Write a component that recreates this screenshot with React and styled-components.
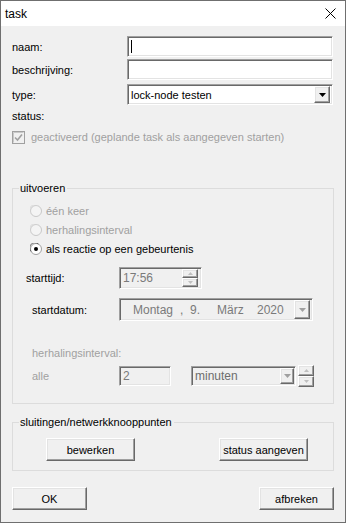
import React from 'react';
import styled, { createGlobalStyle } from 'styled-components';

const GlobalStyle = createGlobalStyle`
  html, body { margin: 0; padding: 0; background: #fff; }
  body { font-family: "Liberation Sans", Arial, sans-serif; font-size: 11px; color: #000; }
  * { box-sizing: border-box; }
`;

const Window = styled.div`
  width: 346px;
  height: 523px;
  border: 1px solid #6f6f6f;
  background: #f0f0f0;
  display: flex;
  flex-direction: column;
`;

const TitleBar = styled.div`
  height: 25px;
  background: #fff;
  display: flex;
  align-items: center;
  justify-content: space-between;
  padding: 0 9px 0 4px;
  font-size: 12px;
`;

const Body = styled.div`
  padding: 10px 11px 0 11px;
  display: flex;
  flex-direction: column;
`;

const Row = styled.div`
  display: flex;
  align-items: center;
  height: ${p => p.$h || 21}px;
  margin-top: ${p => p.$mt || 0}px;
  padding-left: ${p => p.$indent || 0}px;
`;

const Label = styled.span`
  width: ${p => p.$w || 115}px;
  flex: none;
  color: ${p => (p.$disabled ? '#a0a0a0' : '#000')};
`;

const sunken = `
  border: 1px solid;
  border-color: #a0a0a0 #fff #fff #a0a0a0;
  box-shadow: inset 1px 1px #696969, inset -1px -1px #e3e3e3;
`;

const raised = `
  border: 1px solid;
  border-color: #fff #696969 #696969 #fff;
  box-shadow: inset -1px -1px #a0a0a0, inset 1px 1px #e3e3e3;
  background: #f0f0f0;
`;

const TextBox = styled.div`
  ${sunken}
  width: ${p => p.$w}px;
  height: ${p => p.$h || 21}px;
  background: ${p => (p.$disabled ? '#f0f0f0' : '#fff')};
  color: ${p => (p.$disabled ? '#7a7a7a' : '#000')};
  display: flex;
  align-items: center;
  padding: 0 3px;
  flex: none;
  white-space: nowrap;
  font-size: ${p => p.$fs || 11}px;
`;

const Caret = styled.span`
  width: 1px;
  height: 13px;
  background: #000;
`;

const Grow = styled.span`
  flex: 1;
`;

const ArrowButton = styled.div`
  ${raised}
  width: ${p => p.$w || 16}px;
  height: ${p => p.$h || 17}px;
  display: flex;
  align-items: center;
  justify-content: center;
  flex: none;
`;

const Spinner = styled.div`
  display: flex;
  flex-direction: column;
  margin-left: ${p => p.$ml || 0}px;
  flex: none;
`;

const SpinHalf = styled.div`
  ${raised}
  width: ${p => p.$w || 16}px;
  height: ${p => p.$h || 9}px;
  display: flex;
  align-items: center;
  justify-content: center;
`;

const CheckRow = styled.div`
  display: flex;
  align-items: center;
  gap: 6px;
  height: 14px;
  margin-top: ${p => p.$mt || 0}px;
  color: #a0a0a0;
`;

const Group = styled.div`
  border: 1px solid #dcdcdc;
  margin-top: ${p => p.$mt}px;
  height: ${p => p.$h}px;
  display: flex;
  flex-direction: column;
`;

const Legend = styled.div`
  align-self: flex-start;
  margin: -7px 0 0 6px;
  padding: 0 2px 0 1px;
  line-height: 13px;
  height: 13px;
  background: #f0f0f0;
`;

const RadioRow = styled.div`
  display: flex;
  align-items: center;
  gap: 4px;
  height: 19px;
  padding-left: 17px;
  margin-top: ${p => p.$mt || 0}px;
  color: ${p => (p.$disabled ? '#a0a0a0' : '#000')};
`;

const DatePart = styled.span`
  width: ${p => p.$w}px;
  flex: none;
`;

const ButtonRow = styled.div`
  display: flex;
  justify-content: space-between;
  padding: ${p => p.$pad};
  margin-top: ${p => p.$mt || 0}px;
`;

const Button = styled.button`
  ${raised}
  width: ${p => p.$w}px;
  height: ${p => p.$h || 23}px;
  font-family: "Liberation Sans", Arial, sans-serif;
  font-size: 11px;
  color: #000;
  padding: 0;
`;

const CloseIcon = () => (
  <svg width="11" height="11" viewBox="0 0 11 11">
    <path d="M0.5 0.5 L10.5 10.5 M10.5 0.5 L0.5 10.5" stroke="#000" strokeWidth="1" />
  </svg>
);

const DownTri = ({ color = '#000', w = 7 }) => (
  <svg width={w} height={Math.ceil(w / 2)} viewBox={`0 0 ${w} ${Math.ceil(w / 2)}`}>
    <path d={`M0 0 H${w} L${w / 2} ${Math.ceil(w / 2)} Z`} fill={color} />
  </svg>
);

const SpinTri = ({ up, color = '#c0c0c0' }) => (
  <svg width="5" height="3" viewBox="0 0 5 3">
    <path d={up ? 'M2.5 0 L5 3 H0 Z' : 'M0 0 H5 L2.5 3 Z'} fill={color} />
  </svg>
);

const Radio = ({ checked, disabled }) => (
  <svg width="12" height="12" viewBox="0 0 12 12">
    <circle cx="6" cy="6" r="5.5" fill={disabled ? '#f4f4f4' : '#fff'} stroke={disabled ? '#c8c8c8' : '#a0a0a0'} />
    <path d="M1.2 8.5 A5 5 0 0 1 8.5 1.2" fill="none" stroke={disabled ? '#d8d8d8' : '#696969'} />
    {checked && <circle cx="6" cy="6" r="2" fill="#000" />}
  </svg>
);

const CheckBox = () => (
  <svg width="13" height="13" viewBox="0 0 13 13">
    <rect x="0.5" y="0.5" width="12" height="12" fill="#f0f0f0" stroke="#a0a0a0" />
    <path d="M1.5 11.5 V1.5 H11.5" fill="none" stroke="#c8c8c8" />
    <path d="M3 6.5 L5.5 9 L10 3.5" fill="none" stroke="#a0a0a0" strokeWidth="1.6" />
  </svg>
);

export default function App() {
  return (
    <>
      <GlobalStyle />
      <Window>
        <TitleBar>
          <span>task</span>
          <CloseIcon />
        </TitleBar>
        <Body>
          <Row>
            <Label>naam:</Label>
            <TextBox $w={206}><Caret /></TextBox>
          </Row>
          <Row $mt={2}>
            <Label>beschrijving:</Label>
            <TextBox $w={206} />
          </Row>
          <Row $mt={4}>
            <Label>type:</Label>
            <TextBox $w={206} style={{ paddingRight: 2 }}>
              <Grow>lock-node testen</Grow>
              <ArrowButton><DownTri /></ArrowButton>
            </TextBox>
          </Row>
          <Row $h={14} $mt={4}>
            <Label>status:</Label>
          </Row>
          <CheckRow $mt={7}>
            <CheckBox />
            <span>geactiveerd (geplande task als aangegeven starten)</span>
          </CheckRow>

          <Group $mt={44} $h={216}>
            <Legend>uitvoeren</Legend>
            <RadioRow $mt={6} $disabled>
              <Radio disabled />
              <span>één keer</span>
            </RadioRow>
            <RadioRow $disabled>
              <Radio disabled />
              <span>herhalingsinterval</span>
            </RadioRow>
            <RadioRow>
              <Radio checked />
              <span>als reactie op een gebeurtenis</span>
            </RadioRow>
            <Row $h={22} $mt={9} $indent={13}>
              <Label $w={93}>starttijd:</Label>
              <TextBox $w={83} $h={22} $disabled $fs={12}>
                <Grow>17:56</Grow>
                <Spinner>
                  <SpinHalf><SpinTri up /></SpinHalf>
                  <SpinHalf><SpinTri /></SpinHalf>
                </Spinner>
              </TextBox>
            </Row>
            <Row $h={23} $mt={9} $indent={19}>
              <Label $w={87}>startdatum:</Label>
              <TextBox $w={194} $h={23} $disabled $fs={12} style={{ paddingLeft: 13, paddingRight: 2 }}>
                <DatePart $w={47}>Montag</DatePart>
                <DatePart $w={10}>,</DatePart>
                <DatePart $w={27}>9.</DatePart>
                <DatePart $w={40}>März</DatePart>
                <Grow>2020</Grow>
                <ArrowButton $h={19}><DownTri color="#a0a0a0" /></ArrowButton>
              </TextBox>
            </Row>
            <Row $h={14} $mt={25} $indent={19}>
              <Label $disabled $w={200}>herhalingsinterval:</Label>
            </Row>
            <Row $h={20} $mt={6} $indent={19}>
              <Label $disabled $w={87}>alle</Label>
              <TextBox $w={52} $h={20} $disabled $fs={12}>2</TextBox>
              <TextBox $w={105} $h={20} $disabled style={{ marginLeft: 20, paddingRight: 1, color: '#6d6d6d' }} $fs={12}>
                <Grow>minuten</Grow>
                <ArrowButton $w={14} $h={16}><DownTri color="#a0a0a0" /></ArrowButton>
              </TextBox>
              <Spinner $ml={2}>
                <SpinHalf $h={11}><SpinTri up /></SpinHalf>
                <SpinHalf $h={11}><SpinTri /></SpinHalf>
              </Spinner>
            </Row>
          </Group>

          <Group $mt={18} $h={49}>
            <Legend>sluitingen/netwerkknooppunten</Legend>
            <ButtonRow $pad="0 25px 0 33px" $mt={9}>
              <Button $w={89}>bewerken</Button>
              <Button $w={89}>status aangeven</Button>
            </ButtonRow>
          </Group>

          <ButtonRow $mt={16}>
            <Button $w={75} $h={23}>OK</Button>
            <Button $w={75} $h={23}>afbreken</Button>
          </ButtonRow>
        </Body>
      </Window>
    </>
  );
}
